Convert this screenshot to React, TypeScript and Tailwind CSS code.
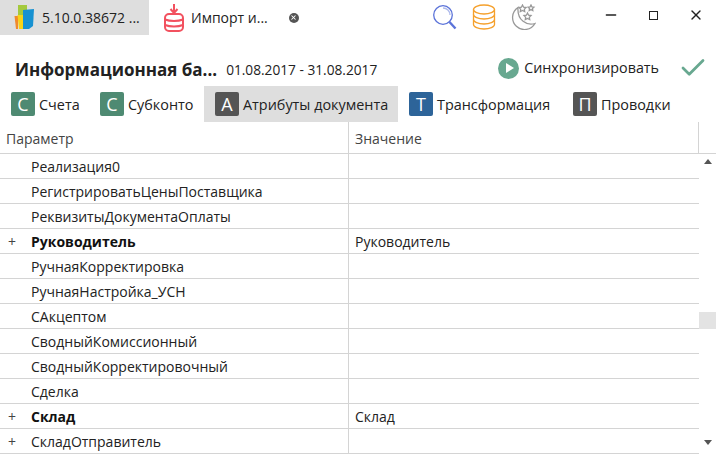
import { Check, X, Minus } from "lucide-react";

const ROWS = [
  { name: "Реализация0" },
  { name: "РегистрироватьЦеныПоставщика" },
  { name: "РеквизитыДокументаОплаты" },
  { name: "Руководитель", value: "Руководитель", bold: true, plus: true },
  { name: "РучнаяКорректировка" },
  { name: "РучнаяНастройка_УСН" },
  { name: "САкцептом" },
  { name: "СводныйКомиссионный" },
  { name: "СводныйКорректировочный" },
  { name: "Сделка" },
  { name: "Склад", value: "Склад", bold: true, plus: true },
  { name: "СкладОтправитель", plus: true },
];

const TABS = [
  { letter: "С", label: "Счета", color: "bg-[#4e8a72]", width: "w-[89px]" },
  { letter: "С", label: "Субконто", color: "bg-[#4e8a72]", width: "w-[115px]" },
  { letter: "А", label: "Атрибуты документа", color: "bg-[#555555]", width: "w-[194px]", active: true },
  { letter: "Т", label: "Трансформация", color: "bg-[#2d6499]", width: "w-[164px]" },
  { letter: "П", label: "Проводки", color: "bg-[#555555]", width: "w-[120px]" },
];

function BooksLogo() {
  return (
    <svg width="22" height="25" viewBox="13 5 22 25">
      <path d="M18 5h9v11h-9z" fill="#a4c93d" />
      <path d="M14.500 16H18v13h-2z" fill="#f08a2c" />
      <path d="M17.500 15H24v14h-5z" fill="#f7d417" />
      <path d="M23 10l11-1-1 17-4 3h-6z" fill="#1791d1" />
    </svg>
  );
}

function ImportIcon() {
  return (
    <svg width="22" height="28" viewBox="0 0 22 28" fill="none" stroke="#f2515f" strokeWidth="2">
      <path d="M11 0v8M7.500 5l3.500 4 3.500-4" />
      <rect x="2" y="10" width="18" height="17" rx="4" />
      <path d="M2 15.500c5 2 13 2 18 0M2 21c5 2 13 2 18 0" />
    </svg>
  );
}

function SearchIcon() {
  return (
    <svg width="24" height="26" viewBox="0 0 24 26" fill="none" stroke="#5b73d9" strokeWidth="1.300">
      <circle cx="10" cy="11" r="9.300" />
      <path d="M10 4a7 7 0 0 1 7 7" strokeOpacity="0.500" />
      <path d="M16.500 18l6 6.500" strokeWidth="2.400" />
    </svg>
  );
}

function DbIcon() {
  return (
    <svg width="24" height="26" viewBox="0 0 24 26" fill="none" stroke="#f5a02c" strokeWidth="1.300">
      <ellipse cx="12" cy="5.500" rx="10.500" ry="4.500" />
      <path d="M1.500 5.500v15c0 2.500 4.700 4.500 10.500 4.500s10.500-2 10.500-4.500v-15" />
      <path d="M1.500 10.500c0 2.500 4.700 4.500 10.500 4.500s10.500-2 10.500-4.500M1.500 15.500c0 2.500 4.700 4.500 10.500 4.500s10.500-2 10.500-4.500" />
    </svg>
  );
}

function MoonIcon() {
  return (
    <svg width="26" height="26" viewBox="0 0 26 26" fill="none" stroke="#999999" strokeWidth="1.300">
      <path d="M8 3.500a12 12 0 1 0 17 16c-8 2.500-18-3-17-16z" />
      <path d="M12.500 1l1.100 2.200 2.400.3-1.700 1.700.4 2.300-2.200-1.100-2.200 1.100.4-2.300L9 3.500l2.400-.3zM21 1l.9 1.800 2 .3-1.400 1.400.3 2-1.800-.9-1.800.9.3-2-1.400-1.400 2-.3zM17.500 9l1.100 2.200 2.400.3-1.700 1.700.4 2.300-2.200-1.100-2.200 1.100.4-2.300-1.700-1.700 2.400-.3z" />
    </svg>
  );
}

export default function App() {
  return (
    <div className="w-[716px] h-[454px] overflow-hidden bg-white text-[#222222] text-[14px] font-['Open_Sans','Noto_Sans',sans-serif]">
      {/* title bar */}
      <div className="flex h-[35px]">
        <div className="flex w-[149px] items-center bg-[#dedede] pl-[13px]">
          <BooksLogo />
          <span className="ml-[7px] whitespace-nowrap">5.10.0.38672 ...</span>
        </div>
        <div className="flex w-[275px] items-center pl-[14px]">
          <ImportIcon />
          <span className="ml-[6px] whitespace-nowrap">Импорт и...</span>
          <span className="ml-[21px] flex h-[10px] w-[10px] items-center justify-center rounded-full bg-[#555555]">
            <X size={7} strokeWidth={3.500} className="text-white" />
          </span>
        </div>
        <div className="flex items-start gap-[15px] pl-[9px] pt-[4px]">
          <SearchIcon />
          <DbIcon />
          <div className="-ml-[1px]">
            <MoonIcon />
          </div>
        </div>
        <div className="ml-auto flex items-center gap-[30px] pb-[5px] pr-[12px] text-[#222222]">
          <Minus size={16} strokeWidth={2} />
          <span className="h-[9px] w-[9px] border-[1.500px] border-[#222222]" />
          <X size={16} strokeWidth={2} />
        </div>
      </div>

      {/* header */}
      <div className="flex h-[51px] items-end pb-[6px] pl-[15px] pr-[8px]">
        <span className="text-[17px] font-bold leading-[20px] whitespace-nowrap">Информационная ба...</span>
        <span className="ml-[9px] text-[13.7px] leading-[21px] whitespace-nowrap">01.08.2017 - 31.08.2017</span>
        <div className="ml-auto -mb-[3px] flex items-center">
          <span className="flex h-[21px] w-[21px] items-center justify-center rounded-full bg-[#68a890]">
            <span className="ml-[2px] h-0 w-0 border-y-[5px] border-l-[8px] border-y-transparent border-l-white" />
          </span>
          <span className="ml-[5px] text-[14.3px] whitespace-nowrap">Синхронизировать</span>
          <Check size={30} strokeWidth={2.200} className="ml-[19px] text-[#68a890]" />
        </div>
      </div>

      {/* tabs */}
      <div className="flex h-[36px]">
        {TABS.map((tab) => (
          <div
            key={tab.label}
            className={`flex items-center pl-[11px] ${tab.width} ${tab.active ? "bg-[#dedede]" : ""}`}
          >
            <span className={`flex h-[24px] w-[24px] items-center justify-center rounded-[2px] text-[18px] text-white ${tab.color}`}>
              {tab.letter}
            </span>
            <span className="ml-[4px] pt-[1px] text-[14.4px] whitespace-nowrap">{tab.label}</span>
          </div>
        ))}
      </div>

      {/* table header */}
      <div className="flex h-[32px] border-b border-[#d4d4d4] text-[#444444]">
        <div className="w-[349px] border-r border-[#d4d4d4] pl-[6px] pt-[6px]">Параметр</div>
        <div className="w-[350px] border-r border-[#d4d4d4] pl-[6px] pt-[6px]">Значение</div>
      </div>

      {/* table body */}
      <div className="flex">
        <div className="w-[699px]">
          {ROWS.map((row) => (
            <div key={row.name} className="flex h-[25px] border-b border-[#d4d4d4]">
              <div className="flex w-[349px] items-center border-r border-[#d4d4d4]">
                <span className="w-[31px] pl-[8px] text-[#444444]">{row.plus ? "+" : ""}</span>
                <span className={row.bold ? "font-bold text-[#111111]" : ""}>{row.name}</span>
              </div>
              <div className="flex items-center pl-[6px]">{row.value}</div>
            </div>
          ))}
        </div>
        <div className="flex h-[300px] w-[17px] flex-col items-center">
          <span className="mt-[5px] h-0 w-0 border-x-[4px] border-b-[5px] border-x-transparent border-b-[#555555]" />
          <span className="mt-[148px] h-[17px] w-[17px] bg-[#e3e3e3]" />
          <span className="mt-[111px] h-0 w-0 border-x-[4px] border-t-[5px] border-x-transparent border-t-[#555555]" />
        </div>
      </div>
    </div>
  );
}
